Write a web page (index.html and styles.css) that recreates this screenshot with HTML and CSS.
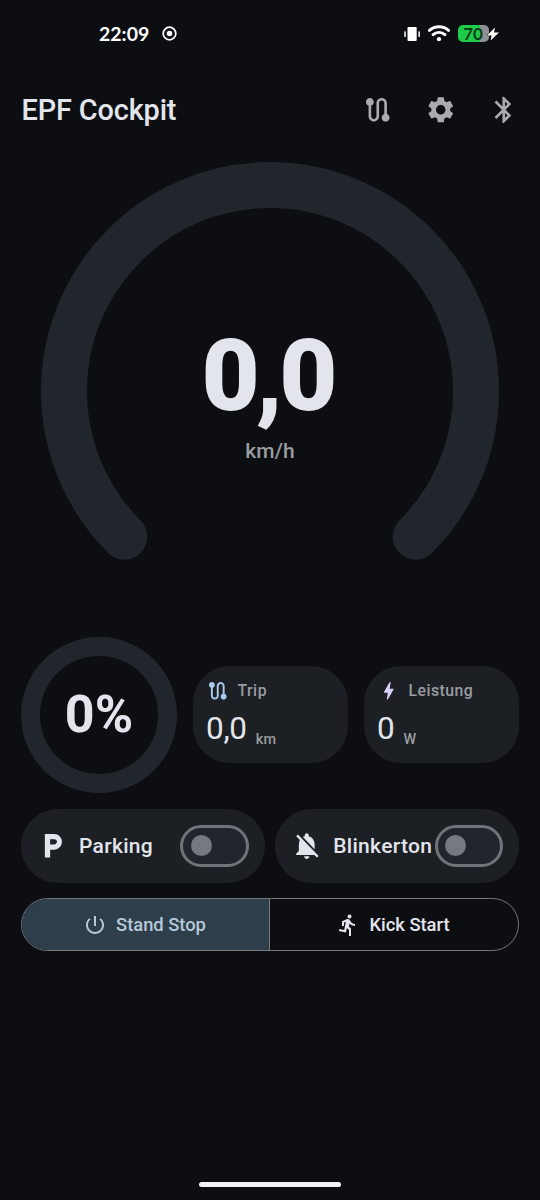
FILE: index.html
```html
<!DOCTYPE html>
<html lang="de">
<head>
<meta charset="utf-8">
<title>EPF Cockpit</title>
<link rel="stylesheet" href="styles.css">
</head>
<body>
<svg class="defs" aria-hidden="true">
  <symbol id="route" viewBox="0 0 24 24"><path d="M19 15.18V7c0-2.21-1.79-4-4-4s-4 1.79-4 4v10c0 1.1-.9 2-2 2s-2-.9-2-2V8.82C8.16 8.4 9 7.3 9 6c0-1.66-1.34-3-3-3S3 4.34 3 6c0 1.3.84 2.4 2 2.82V17c0 2.21 1.79 4 4 4s4-1.79 4-4V7c0-1.1.9-2 2-2s2 .9 2 2v8.18c-1.16.42-2 1.52-2 2.82 0 1.66 1.34 3 3 3s3-1.34 3-3c0-1.3-.84-2.4-2-2.82z"/></symbol>
</svg>
<div class="screen">
  <div class="status">
    <span class="clock">22:09</span>
    <svg class="record" viewBox="0 0 14 14"><circle cx="7" cy="7" r="5.9" fill="none" stroke="#fff" stroke-width="1.6"/><circle cx="7" cy="7" r="2.6" fill="#fff"/></svg>
    <svg class="vibrate" viewBox="0 0 16 14" fill="#fff"><rect x="3.5" y="0" width="9.2" height="14" rx="1"/><rect x="0.3" y="4.2" width="1.5" height="5.8" rx=".6"/><rect x="14.4" y="4.2" width="1.5" height="5.8" rx=".6"/></svg>
    <svg class="wifi" viewBox="0 0 22 17" fill="none" stroke="#fff" stroke-width="2.9" stroke-linecap="round"><path d="M1.5 5.4a14 14 0 0 1 19 0M5.1 9.6a8.8 8.8 0 0 1 11.8 0"/><circle cx="11" cy="14.2" r="2.1" fill="#fff" stroke="none"/></svg>
    <div class="battery"><span>70</span><svg viewBox="0 0 12 14"><path d="M8 .5 0 8.4h4.6L3.6 13.5 12 5.5H7z" fill="#fff"/></svg></div>
  </div>
  <header class="bar">
    <h1>EPF Cockpit</h1>
    <nav>
      <svg><use href="#route"/></svg>
      <svg viewBox="0 0 24 24"><path d="M19.14 12.94c.04-.3.06-.61.06-.94 0-.32-.02-.64-.07-.94l2.03-1.58a.49.49 0 0 0 .12-.61l-1.92-3.32a.488.488 0 0 0-.59-.22l-2.39.96c-.5-.38-1.03-.7-1.62-.94l-.36-2.54a.484.484 0 0 0-.48-.41h-3.84c-.24 0-.43.17-.47.41l-.36 2.54c-.59.24-1.13.57-1.62.94l-2.39-.96c-.22-.08-.47 0-.59.22L2.74 8.87c-.12.21-.08.47.12.61l2.03 1.58c-.05.3-.09.63-.09.94s.02.64.07.94l-2.03 1.58a.49.49 0 0 0-.12.61l1.92 3.32c.12.22.37.29.59.22l2.39-.96c.5.38 1.03.7 1.62.94l.36 2.54c.05.24.24.41.48.41h3.84c.24 0 .44-.17.47-.41l.36-2.54c.59-.24 1.13-.56 1.62-.94l2.39.96c.22.08.47 0 .59-.22l1.92-3.32c.12-.22.07-.47-.12-.61l-2.01-1.58zM12 15.6c-1.98 0-3.6-1.62-3.6-3.6s1.62-3.6 3.6-3.6 3.6 1.62 3.6 3.6-1.62 3.6-3.6 3.6z"/></svg>
      <svg viewBox="0 0 24 24"><path d="M17.71 7.71 12 2h-1v7.59L6.41 5 5 6.41 10.59 12 5 17.59 6.41 19 11 14.41V22h1l5.71-5.71-4.3-4.29 4.3-4.29zM13 5.83l1.88 1.88L13 9.59V5.83zm1.88 10.46L13 18.17v-3.76l1.88 1.88z"/></svg>
    </nav>
  </header>
  <section class="speed">
    <svg viewBox="0 0 458 458"><path d="M83.3 374.7A206 206 0 1 1 374.7 374.7"/></svg>
    <div class="reading"><strong>0,0</strong><span>km/h</span></div>
  </section>
  <section class="stats">
    <div class="charge">0%</div>
    <div class="card">
      <div class="label"><svg class="trip"><use href="#route"/></svg>Trip</div>
      <div class="value">0,0<small>km</small></div>
    </div>
    <div class="card">
      <div class="label"><svg class="power" viewBox="0 0 24 24"><path d="M11 21h-1l1-7H7.500c-.88 0-.33-.75-.31-.78C8.480 10.940 10.420 7.540 13.010 3h1l-1 7h3.510c.4 0 .62.19.4.660C12.970 17.550 11 21 11 21z"/></svg>Leistung</div>
      <div class="value">0<small>W</small></div>
    </div>
  </section>
  <section class="toggles">
    <div class="toggle">
      <svg viewBox="0 0 24 24"><path d="M13 3H6v18h4v-6h3c3.310 0 6-2.690 6-6s-2.690-6-6-6zm.2 8H10V7h3.200c1.100 0 2 .9 2 2s-.9 2-2 2z"/></svg>
      <span>Parking</span><i class="switch"></i>
    </div>
    <div class="toggle">
      <svg viewBox="0 0 24 24"><path d="M20 18.690 7.840 6.140 5.270 3.490 4 4.760l2.800 2.800v.01c-.52.99-.8 2.160-.8 3.420v5l-2 2v1h13.730l2 2L21 19.720l-1-1.030zM12 22c1.110 0 2-.89 2-2h-4c0 1.110.89 2 2 2zm6-7.320V11c0-3.080-1.640-5.640-4.500-6.320V4c0-.83-.67-1.500-1.500-1.500s-1.500.67-1.500 1.500v.68c-.15.03-.29.08-.42.12-.1.03-.2.07-.3.11h-.01c-.01 0-.01 0-.02.01-.23.09-.46.2-.68.310 0 0-.01 0-.01.01L18 14.680z"/></svg>
      <span>Blinkerton</span><i class="switch"></i>
    </div>
  </section>
  <section class="modes">
    <div class="mode selected"><svg viewBox="0 0 24 24"><path d="M13 3h-2v10h2V3zm4.830 2.170-1.420 1.420C17.990 7.860 19 9.810 19 12c0 3.870-3.130 7-7 7s-7-3.130-7-7c0-2.190 1.010-4.140 2.580-5.420L6.170 5.170C4.230 6.820 3 9.260 3 12c0 4.970 4.030 9 9 9s9-4.030 9-9c0-2.740-1.230-5.180-3.170-6.830z"/></svg>Stand Stop</div>
    <div class="mode"><svg viewBox="0 0 24 24"><path d="M13.490 5.480c1.100 0 2-.9 2-2s-.9-2-2-2-2 .9-2 2 .9 2 2 2zm-3.600 13.900 1-4.400 2.100 2v6h2v-7.500l-2.100-2 .6-3c1.300 1.500 3.300 2.500 5.500 2.500v-2c-1.900 0-3.500-1-4.300-2.400l-1-1.600c-.4-.6-1-1-1.700-1-.3 0-.5.1-.8.1l-5.200 2.200v4.700h2v-3.400l1.800-.7-1.600 8.100-4.900-1-.4 2 7 1.400z"/></svg>Kick Start</div>
  </section>
  <div class="home"></div>
</div>
</body>
</html>
```
FILE: styles.css
```css
* { box-sizing: border-box; }
body { margin: 0; background: #0c0e12; color: #e3e5ed; font-family: Roboto, "Liberation Sans", sans-serif; }
svg { display: block; fill: currentColor; flex: none; }
.defs { position: absolute; width: 0; height: 0; }
.screen { width: 540px; height: 1200px; display: flex; flex-direction: column; overflow: hidden; }

.status { height: 67px; flex: none; display: flex; align-items: center; padding: 0 41.5px 0 99px; }
.clock { font: 700 19.5px/24px Lato, sans-serif; color: #fff; width: 63px; }
.record { width: 15px; height: 15px; }
.vibrate { width: 16px; height: 14px; margin-left: auto; fill: #fff; }
.wifi { width: 22px; height: 17px; margin-left: 8px; fill: none; }
.battery { width: 41px; height: 17px; margin-left: 8px; display: flex; align-items: center; }
.battery span { width: 31px; height: 17px; border-radius: 5px; background: linear-gradient(90deg, #1fcb4a 70%, #8d8f92 70%); color: #073f16; font: 700 17px/17px Lato, sans-serif; text-align: center; }
.battery svg { width: 12px; height: 14px; margin-left: -2px; stroke: #0c0e12; stroke-width: 1; paint-order: stroke; overflow: visible; }

.bar { height: 85px; flex: none; display: flex; align-items: center; justify-content: space-between; padding: 0 21px 0 21.5px; }
h1 { margin: 0; font-size: 28.9px; font-weight: 500; line-height: 36px; letter-spacing: -.15px; }
nav { display: flex; gap: 31.5px; color: #a9abb0; }
nav svg { width: 31.5px; height: 31.5px; }

.speed { height: 458px; flex: none; margin: 10px 41px 0; display: grid; }
.speed > * { grid-area: 1 / 1; }
.speed svg { width: 458px; height: 458px; fill: none; stroke: #20262c; stroke-width: 46; stroke-linecap: round; }
.reading { display: flex; flex-direction: column; align-items: center; padding-top: 154px; }
.reading strong { font-size: 100.5px; line-height: 120px; font-weight: 900; letter-spacing: -3.8px; margin-right: 5px; }
.reading span { font-size: 21px; line-height: 28px; margin-top: 1px; font-weight: 500; letter-spacing: .1px; color: #9a9ca1; }

.stats { height: 156px; flex: none; margin: 16.5px 21px 0; display: grid; grid-template-columns: 156px 155px 155px; column-gap: 16px; align-items: center; }
.charge { height: 156px; border: 19px solid #20262c; border-radius: 50%; display: grid; place-items: center; font-size: 52px; font-weight: 700; }
.card { height: 97px; border-radius: 37px; background: #1c2024; padding: 14px 13px; }
.label { display: flex; align-items: center; gap: 8px; height: 21px; font-size: 15.75px; font-weight: 500; letter-spacing: .5px; color: #9a9ca1; }
.label svg { width: 23.5px; height: 23.5px; }
.trip { color: #a8caee; }
.power { color: #d9d0fa; }
.value { display: flex; align-items: flex-end; font-size: 31.5px; line-height: 40px; margin-top: 8px; letter-spacing: -.3px; }
.value small { font-size: 14.4px; font-weight: 500; line-height: 20px; margin: 0 0 -1px 9px; letter-spacing: .3px; color: #9a9ca1; }

.toggles { flex: none; display: grid; grid-template-columns: 1fr 1fr; gap: 10.5px; margin: 16px 21px 0; }
.toggle { height: 74px; border-radius: 37px; background: #1c2024; display: flex; align-items: center; padding: 0 16px; }
.toggle svg { width: 31.5px; height: 31.5px; }
.toggle span { margin-left: 10.5px; font-size: 21px; font-weight: 500; letter-spacing: .3px; }
.switch { flex: none; width: 68.5px; height: 42px; margin-left: auto; border: 3px solid #70747a; border-radius: 21px; background: #20262c; display: flex; align-items: center; padding-left: 7.5px; }
.switch::before { content: ""; width: 21px; height: 21px; border-radius: 50%; background: #757980; }

.modes { flex: none; height: 53px; margin: 15.5px 21px 0; border: 1.3px solid #74797d; border-radius: 27px; display: grid; grid-template-columns: 1fr 1fr; overflow: hidden; }
.mode { display: flex; align-items: center; justify-content: center; gap: 9px; padding-right: 2px; font-size: 18.4px; font-weight: 500; letter-spacing: -.03px; }
.mode svg { width: 24px; height: 24px; }
.selected { background: #2e3e4a; color: #b5c9d8; border-right: 1px solid #74797d; }

.home { width: 142px; height: 5px; border-radius: 3px; background: #f3f3f3; margin: auto auto 13px; }
```
